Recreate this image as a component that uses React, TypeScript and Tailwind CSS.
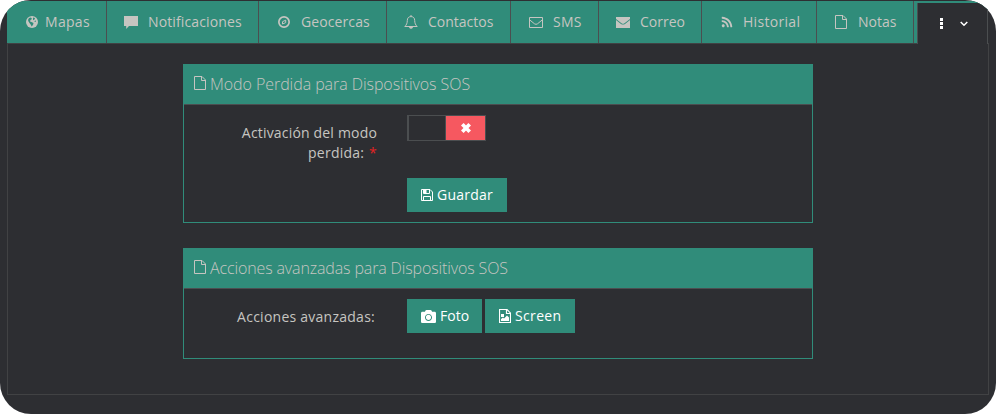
import type { ReactNode } from 'react';
import { FaCamera, FaRss } from 'react-icons/fa';

const FileIcon = ({ className = '' }: { className?: string }) => (
  <svg viewBox="0 0 12 14" className={className} fill="none" stroke="currentColor">
    <path d="M.5.5H8L11.5 4V13.5H.5ZM7.5.5V4.5H11.5" />
  </svg>
);
const Globe = () => (
  <svg viewBox="0 0 12 12" className="size-3">
    <circle cx="6" cy="6" r="6" fill="currentColor" />
    <path d="M3 2L5 1.500L6 3L4.500 4L4 5.500L5.500 6L7.500 7L7 9L5.500 10.500L5 9L3.500 7L2.500 5.500L2 4ZM7 1.500L9 2L8.500 3.500L7 4.200ZM8.500 5L10 4.500L10 5.500L8.800 6Z" fill="#308c7a" />
  </svg>
);
const Chat = () => (
  <svg viewBox="0 0 14 13" className="h-[13px] w-[14px]" fill="currentColor">
    <path d="M0 0H14V10H5L2.2 13V10H0Z" />
  </svg>
);
const Compass = () => (
  <svg viewBox="0 0 12 12" className="size-3" fill="none" stroke="currentColor">
    <circle cx="6" cy="6" r="5.150" strokeWidth="1.700" />
    <path d="M7.700 4.200V6.600L4.500 8V5.700Z" />
  </svg>
);
const Bell = () => (
  <svg viewBox="0 0 14 14" className="size-[14px]" fill="none" stroke="currentColor">
    <path d="M7 0V1.500M.8 11.500C2.500 10 3.300 8 3.300 5.500C3.300 3 4.700 1.600 7 1.600S10.700 3 10.700 5.500C10.700 8 11.500 10 13.200 11.500Z" />
    <path d="M5.200 12Q5.500 13.500 7 13.500T8.800 12Z" fill="currentColor" strokeWidth=".5" />
  </svg>
);
const MailOutline = () => (
  <svg viewBox="0 0 14 11" className="h-[11px] w-[14px]" fill="none" stroke="currentColor">
    <path d="M.5.5H13.500V10.500H.5ZM.8 3L5.500 6.800Q7 7.900 8.500 6.800L13.200 3" />
  </svg>
);
const Mail = () => (
  <svg viewBox="0 0 14 11" className="h-[11px] w-[14px]" fill="currentColor">
    <path d="M0 0H14V2L8.500 6.200Q7 7.300 5.500 6.200L0 2ZM0 3.100L5 6.900Q7 8.300 9 6.900L14 3.100V11H0Z" />
  </svg>
);
const Save = () => (
  <svg viewBox="0 0 12 12" className="size-3" fill="none" stroke="currentColor">
    <path d="M.5.5H9L11.500 3V11.500H.5ZM2.500 11.500V7.500H9.500V11.500M2.500.5V4.500H8.500V.5" />
    <path d="M3 1H5.500V4H3Z" fill="currentColor" stroke="none" />
  </svg>
);
const ImageFile = () => (
  <svg viewBox="0 0 12 14" className="h-[14px] w-3" fill="none" stroke="currentColor">
    <path d="M.5.5H8L11.500 4V13.500H.5ZM7.500.5V4.500H11.500" strokeWidth="1.200" />
    <path d="M2 12V10L4 8.500L5 9.500L8 6.500L10 8.500V12ZM2 5H5V8H2Z" fill="currentColor" stroke="none" />
  </svg>
);

type TabProps = { box: string; icon: ReactNode; slot: string; text: string; label: string };

const tabs: TabProps[] = [
  { box: 'w-[100px] pl-[19px]', icon: <Globe />, slot: 'w-[19px]', text: 'tracking-[0.3px]', label: 'Mapas' },
  { box: 'w-[152px] pl-[17px]', icon: <Chat />, slot: 'w-[24px]', text: 'tracking-[0.12px]', label: 'Notificaciones' },
  { box: 'w-[128px] pl-[19px]', icon: <Compass />, slot: 'w-[23px]', text: 'tracking-[0.1px]', label: 'Geocercas' },
  { box: 'w-[124px] pl-[17px]', icon: <Bell />, slot: 'w-[24px]', text: '', label: 'Contactos' },
  { box: 'w-[88px] pl-[18px]', icon: <MailOutline />, slot: 'w-[24px]', text: 'tracking-[0.3px]', label: 'SMS' },
  { box: 'w-[103px] pl-[17px]', icon: <Mail />, slot: 'w-[24px]', text: '', label: 'Correo' },
  { box: 'w-[115px] pl-[19px]', icon: <FaRss className="size-[12px]" />, slot: 'w-[22px]', text: 'tracking-[0.3px]', label: 'Historial' },
  { box: 'w-[97px] pl-[18px]', icon: <FileIcon className="h-[14px] w-3" />, slot: 'w-[23px]', text: '', label: 'Notas' },
];

function Tab({ box, icon, slot, text, label }: TabProps) {
  return (
    <div className={`flex h-[42px] shrink-0 items-center border-r border-[#4b4e50] ${box}`}>
      <span className={`shrink-0 ${slot}`}>{icon}</span>
      <span className={`whitespace-nowrap ${text}`}>{label}</span>
    </div>
  );
}

function Panel({ title, titleClass, height, children }: { title: string; titleClass: string; height: string; children: ReactNode }) {
  return (
    <section className={`ml-[183px] w-[630px] border border-[#308c7a] ${height}`}>
      <h2 className="flex h-[40px] items-center border-b border-[#4b4e50] bg-[#308c7a] pl-[10px] text-[16px] font-light">
        <FileIcon className="mb-[4px] h-[14px] w-[12px]" />
        <span className={`mb-[2px] whitespace-nowrap ${titleClass}`}>{title}</span>
      </h2>
      {children}
    </section>
  );
}

const button = 'flex h-[34px] items-center bg-[#308c7a] pl-[14px] text-white whitespace-nowrap';

export default function App() {
  return (
    <div className="h-[414px] w-[996px] bg-white">
      <main className="relative h-[414px] w-[996px] overflow-hidden rounded-[31px] bg-[#2d2e32] font-['Open_Sans','Noto_Sans',sans-serif] text-[14px] leading-[20px] text-[#c6c5c1]">
        <div className="pointer-events-none absolute top-[43px] left-[7px] h-[352px] w-[982px] border border-[#414244]" />
        <nav className="relative mt-px ml-[7px] flex h-[42px] w-[981px] bg-[#308c7a]">
          {tabs.map((tab) => <Tab key={tab.label} {...tab} />)}
          <div className="mt-[2px] ml-[3px] flex h-[41px] w-[71px] items-center border-x border-[#4b4e50] bg-[#2d2e32] pl-[22px] text-white">
            <svg viewBox="0 0 3 11" className="mb-px h-[11px] w-[3px]" fill="currentColor"><path d="M0 0H3V3H0ZM0 4H3V7H0ZM0 8H3V11H0Z" /></svg>
            <svg viewBox="0 0 8 6" className="ml-[17px] h-[6px] w-2" fill="none" stroke="currentColor" strokeWidth="1.500"><path d="M.7 1L4 4.300L7.300 1" /></svg>
          </div>
        </nav>
        <div className="mt-[21px]">
          <Panel title="Modo Perdida para Dispositivos SOS" titleClass="ml-[4px] tracking-[-0.06px]" height="h-[159px]">
            <div className="flex">
              <p className="mt-[18px] w-[193px] text-right tracking-[0.18px]">Activación del modo<br /><span className="tracking-[0.25px]">perdida:</span> <span className="ml-px text-[#e32222]">*</span></p>
              <div className="ml-[30px]">
                <div className="mt-[10px] flex h-[26px] w-[79px] border border-l-2 border-[#4b4e50]">
                  <span className="w-[37px] border-r border-[#4b4e50]" />
                  <span className="flex flex-1 items-center justify-center bg-[#f65860] text-white">
                    <svg viewBox="0 0 10 10" className="size-[10px]" stroke="currentColor" strokeWidth="3.700"><path d="M1.300 1.300L8.700 8.700M8.700 1.300L1.300 8.700" /></svg>
                  </span>
                </div>
                <button className={`mt-[37px] w-[100px] ${button}`}><Save /><span className="ml-[4px] tracking-[0.25px]">Guardar</span></button>
              </div>
            </div>
          </Panel>
          <div className="h-[25px]" />
          <Panel title="Acciones avanzadas para Dispositivos SOS" titleClass="ml-[4px] tracking-[-0.13px]" height="h-[111px]">
            <div className="flex">
              <p className="mt-[18px] w-[191px] text-right tracking-[0.25px]">Acciones avanzadas:</p>
              <div className="mt-[10px] ml-[32px] flex gap-[3px]">
                <button className={`w-[75px] ${button}`}><FaCamera className="size-[15px]" /><span className="ml-[4px]">Foto</span></button>
                <button className={`w-[90px] ${button}`}><ImageFile /><span className="ml-[4px] tracking-[0.35px]">Screen</span></button>
              </div>
            </div>
          </Panel>
        </div>
      </main>
    </div>
  );
}
